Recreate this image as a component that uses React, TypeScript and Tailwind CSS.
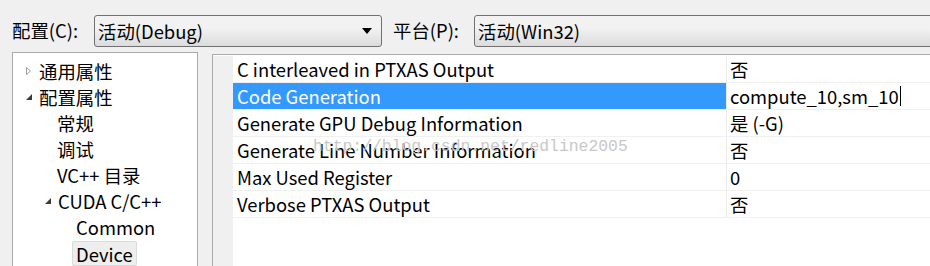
import React from "react"

const font = { fontFamily: '"Noto Sans CJK SC", "Noto Sans", sans-serif' }

type Row = { name: string; value: string; selected?: boolean }

const rows: Row[] = [
  { name: "C interleaved in PTXAS Output", value: "否" },
  { name: "Code Generation", value: "compute_10,sm_10", selected: true },
  { name: "Generate GPU Debug Information", value: "是 (-G)" },
  { name: "Generate Line Number Information", value: "否" },
  { name: "Max Used Register", value: "0" },
  { name: "Verbose PTXAS Output", value: "否" },
]

function Combo({ text, arrow, className }: { text: string; arrow?: boolean; className: string }) {
  return (
    <div
      className={
        "h-[32px] flex items-center rounded-[3px] border border-[#707070] bg-gradient-to-b from-[#f2f2f2] from-40% to-[#dcdcdc] pl-[3px] pr-[9px] " +
        className
      }
    >
      <span className="flex-1 text-[18.4px] text-black leading-none">{text}</span>
      {arrow && (
        <svg width="10" height="6" viewBox="0 0 10 6">
          <path d="M0 0h10L5 6z" fill="#000" />
        </svg>
      )}
    </div>
  )
}

function Tri({ open }: { open?: boolean }) {
  return open ? (
    <svg width="8" height="8" viewBox="0 0 8 8" className="shrink-0">
      <path d="M7 1v6H1z" fill="#3c3c3c" />
    </svg>
  ) : (
    <svg width="8" height="10" viewBox="0 0 8 10" className="shrink-0">
      <path d="M1.5 1.5l4 3.5-4 3.5z" fill="none" stroke="#a0a0a0" />
    </svg>
  )
}

export default function App() {
  return (
    <div className="w-[930px] h-[266px] overflow-hidden bg-[#f0f0f0] flex flex-col" style={font}>
      {/* top bar */}
      <div className="h-[54px] flex items-start pt-[15px] pl-[12px] text-[18.4px] text-black">
        <span className="w-[82px] h-[32px] flex items-center">配置(C):</span>
        <Combo text="活动(Debug)" arrow className="w-[288px]" />
        <span className="w-[92px] h-[32px] flex items-center pl-[11px]">平台(P):</span>
        <Combo text="活动(Win32)" className="flex-1 -mr-[4px]" />
      </div>

      <div className="flex-1 flex pl-[12px] gap-[14px]">
        {/* tree */}
        <div className="w-[186px] bg-white border border-[#aaaaaa] border-b-0 pt-[5px] text-[18.4px] text-black leading-[26px]">
          <div className="flex items-center h-[26px] pl-[12px] gap-[6px]">
            <Tri />
            <span>通用属性</span>
          </div>
          <div className="flex items-center h-[26px] pl-[12px] gap-[6px]">
            <Tri open />
            <span>配置属性</span>
          </div>
          <div className="h-[26px] pl-[44px]">常规</div>
          <div className="h-[26px] pl-[44px]">调试</div>
          <div className="h-[26px] pl-[44px]">VC++ 目录</div>
          <div className="flex items-center h-[26px] pl-[31px] gap-[6px]">
            <Tri open />
            <span>CUDA C/C++</span>
          </div>
          <div className="h-[26px] pl-[63px]">Common</div>
          <div className="h-[26px] pl-[59px] pt-[1px]">
            <span className="inline-block h-[25px] leading-[24px] px-[3px] bg-[#eeeeee] border border-[#dadada] rounded-[2px]">
              Device
            </span>
          </div>
        </div>

        {/* property grid */}
        <div className="relative flex-1 bg-white border-l border-t border-[#aaaaaa] mt-[2px] pt-[1px] flex">
          <div className="w-[20px] bg-[#f0f0f0]" />
          <div className="flex-1 text-[18.4px] text-black">
            {rows.map((r) => (
              <div key={r.name} className="flex h-[27px] border-b border-[#f0f0f0]">
                <div
                  className={
                    "w-[493px] pl-[4px] leading-[26px] " +
                    (r.selected ? "bg-[#3399ff] text-white" : "")
                  }
                >
                  {r.name}
                </div>
                <div className="flex-1 border-l border-[#eaeaea] pl-[3px] leading-[26px] flex items-center">
                  <span>{r.value}</span>
                  {r.selected && <span className="w-[1px] h-[20px] bg-black ml-[1px]" />}
                </div>
              </div>
            ))}
          </div>
          <span
            className="absolute left-[100px] top-[84px] text-[16.4px] leading-none text-[#c8c8c8] pointer-events-none"
            style={{ fontFamily: '"Liberation Mono", monospace' }}
          >
            http://blog.csdn.net/redline2005
          </span>
        </div>
      </div>
    </div>
  )
}
